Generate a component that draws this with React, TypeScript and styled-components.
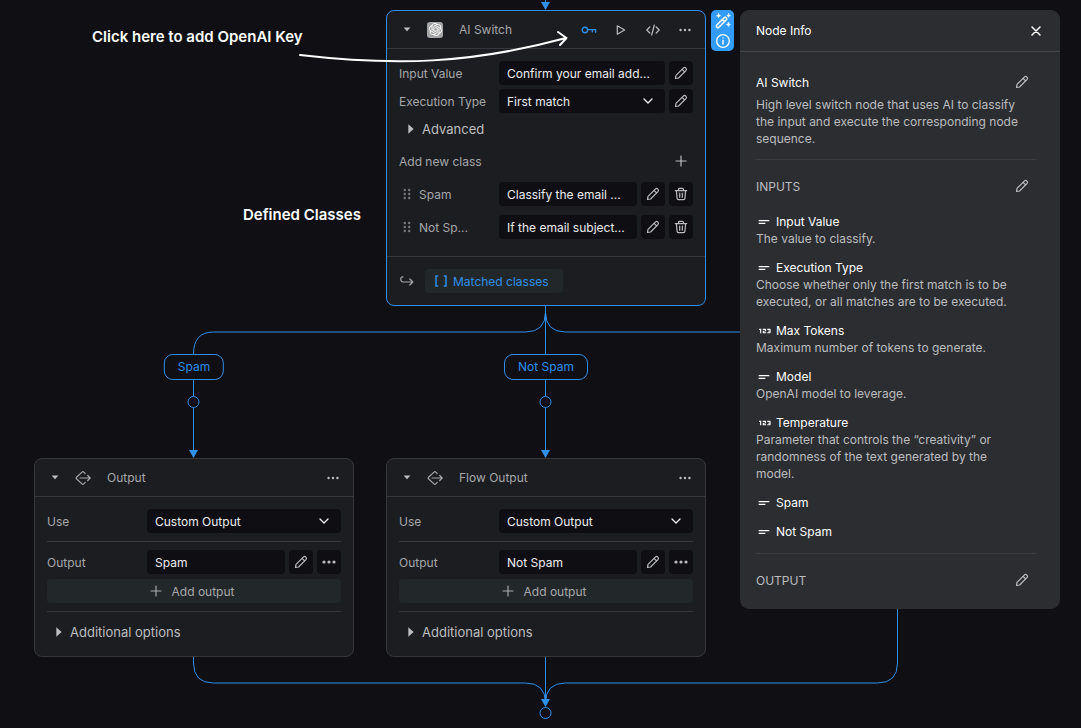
import React, { useId } from "react";
import styled, { createGlobalStyle, css } from "styled-components";
import { SiOpenai } from "react-icons/si";
import { Md123, MdShortText } from "react-icons/md";

const color = {
  canvas: "#101014",
  node: "#1c1d21",
  field: "#0f0f13",
  line: "#36383c",
  soft: "#222829",
  panel: "#2c2d31",
  panelLine: "#3b3c40",
  label: "#a6a7a9",
  muted: "#bcbdbf",
  bright: "#ececed",
  white: "#ffffff",
  blue: "#2f8fea",
  accent: "#339cff",
};

const GlobalStyle = createGlobalStyle`
  *, *::before, *::after { box-sizing: border-box; }
  body {
    margin: 0;
    background: ${color.canvas};
    color: ${color.label};
    font: 400 12px/17px Inter, "Liberation Sans", sans-serif;
  }
  button, input, select { font: inherit; color: inherit; }
  h2, h3, p { margin: 0; font: inherit; }
`;

/* ---------- icons ---------- */

const Stroke = styled.svg`
  display: block;
  flex: none;
  fill: none;
  stroke: currentColor;
  stroke-width: 1.2;
  stroke-linecap: round;
  stroke-linejoin: round;
`;

const PencilIcon = () => (
  <Stroke width="14" height="14" viewBox="0 0 14 14" aria-hidden="true">
    <path d="M1.5 12.5l.5-3.1L9.3 2.1a1.9 1.9 0 0 1 2.6 0 1.9 1.9 0 0 1 0 2.6L4.6 12z" />
    <path d="M8.1 3.4l2.5 2.5" />
  </Stroke>
);

const TrashIcon = () => (
  <Stroke width="14" height="14" viewBox="0 0 14 14" aria-hidden="true">
    <path d="M1.3 3.6h11.4M4.6 3.4V2.2q0-.9.9-.9h3q.9 0 .9.9v1.2M2.4 3.8l.7 7.6q.1 1.2 1.3 1.2h5.2q1.2 0 1.3-1.2l.7-7.6M5.7 6v4.2M8.3 6v4.2" />
  </Stroke>
);

const CaretIcon = () => (
  <svg width="8" height="5" viewBox="0 0 8 5" fill="currentColor" aria-hidden="true">
    <path d="M.6.6h6.8L4 4.2z" />
  </svg>
);

const TriangleIcon = () => (
  <svg width="6" height="10" viewBox="0 0 6 10" fill="currentColor" aria-hidden="true">
    <path d="M.3.2L5.6 5 .3 9.8z" />
  </svg>
);

const ChevronIcon = () => (
  <Stroke width="10" height="10" viewBox="0 0 10 10" aria-hidden="true">
    <path d="M1 3l4 4 4-4" strokeWidth="1.4" />
  </Stroke>
);

const DotsIcon = ({ large = false }: { large?: boolean }) => (
  <svg width="14" height="4" viewBox="0 0 14 4" fill="currentColor" aria-hidden="true">
    {(large ? [2, 7, 12] : [2.6, 7, 11.4]).map((x) => (
      <circle key={x} cx={x} cy="2" r={large ? 1.6 : 1.2} />
    ))}
  </svg>
);

const PlusIcon = () => (
  <Stroke width="12" height="12" viewBox="0 0 12 12" aria-hidden="true">
    <path d="M6 1v10M1 6h10" />
  </Stroke>
);

const KeyIcon = () => (
  <Stroke width="16" height="10" viewBox="0 0 16 10" aria-hidden="true">
    <circle cx="3.9" cy="5" r="2.7" strokeWidth="1.4" />
    <path d="M6.6 4.6h8v2.7M11.3 4.6v2.2" strokeWidth="1.4" />
  </Stroke>
);

const PlayIcon = () => (
  <Stroke width="10" height="12" viewBox="0 0 10 12" aria-hidden="true">
    <path d="M1.3 1.8v8.4L8.6 6z" />
  </Stroke>
);

const CodeIcon = () => (
  <Stroke width="14" height="12" viewBox="0 0 14 12" aria-hidden="true">
    <path d="M3.8 3L.8 6l3 3M10.2 3l3 3-3 3M8.3 1L5.7 11" />
  </Stroke>
);

const GripIcon = () => (
  <svg width="8" height="12" viewBox="0 0 8 12" fill="#77787b" aria-hidden="true">
    {[2, 6, 10].map((y) => (
      <g key={y}>
        <circle cx="1.8" cy={y} r="1.2" />
        <circle cx="6.2" cy={y} r="1.2" />
      </g>
    ))}
  </svg>
);

const ReturnIcon = () => (
  <Stroke width="14" height="12" viewBox="0 0 14 12" aria-hidden="true">
    <path d="M3 1.8H2.6a1.8 1.8 0 0 0-1.8 1.8v1.2a2.2 2.2 0 0 0 2.2 2.2h9.6M9.8 4l3 3-3 3" />
  </Stroke>
);

const OutputIcon = () => (
  <Stroke width="16" height="16" viewBox="0 0 16 16" aria-hidden="true">
    <path d="M10.2 3.6L8.800 2.1a1.2 1.2 0 0 0-1.8 0L1.5 7.2a1.100 1.100 0 0 0 0 1.6L7 13.900a1.2 1.2 0 0 0 1.8 0l1.4-1.500M5 8h10M12.700 5.500L15.2 8l-2.500 2.500" />
  </Stroke>
);

const BracketsIcon = () => (
  <Stroke width="12" height="12" viewBox="0 0 12 12" aria-hidden="true">
    <path d="M3.2 1H1v10h2.2M8.8 1H11v10H8.8" strokeWidth="1.5" strokeLinecap="butt" strokeLinejoin="miter" />
  </Stroke>
);

const CloseIcon = () => (
  <Stroke width="10" height="10" viewBox="0 0 10 10" aria-hidden="true">
    <path d="M1 1l8 8M9 1L1 9" strokeWidth="1.5" />
  </Stroke>
);

const WandIcon = () => (
  <Stroke width="16" height="16" viewBox="0 0 16 16" aria-hidden="true">
    <path d="M1.6 12.2l7.6-7.6a1.2 1.2 0 0 1 1.7 0l.5.5a1.2 1.2 0 0 1 0 1.7l-7.6 7.6a1.2 1.2 0 0 1-1.7 0l-.5-.5a1.2 1.2 0 0 1 0-1.7zM7.4 6.6l2 2" strokeWidth="1.5" />
    <path
      d="M3.6.6l.6 1.5 1.5.6-1.5.6-.6 1.5L3 3.3l-1.5-.6L3 2.1zM13.6.8l.5 1.3 1.3.5-1.3.5-.5 1.3-.5-1.3-1.3-.5 1.3-.5zM13.4 9.4l.6 1.5 1.5.6-1.5.6-.6 1.5-.6-1.5-1.5-.6 1.5-.6z"
      fill="currentColor"
      strokeWidth="0.6"
    />
  </Stroke>
);

const InfoIcon = () => (
  <Stroke width="16" height="16" viewBox="0 0 16 16" aria-hidden="true">
    <circle cx="8" cy="8" r="6.3" strokeWidth="1.3" />
    <path d="M8 7.4v3.6M8 4.9v.2" strokeWidth="1.4" />
  </Stroke>
);

/* ---------- canvas ---------- */

const Canvas = styled.main`
  position: relative;
  width: 100%;
  min-height: 100vh;
  overflow: hidden;
`;

const Placed = css<{ $x: number; $y: number }>`
  position: absolute;
  left: ${(p) => p.$x}px;
  top: ${(p) => p.$y}px;
`;

const Edges = styled.svg`
  position: absolute;
  inset: 0;
  width: 100%;
  height: 100%;
  fill: none;
  stroke: ${color.blue};
  pointer-events: none;
`;

const Annotations = styled(Edges)`
  stroke: ${color.white};
  stroke-width: 2;
  stroke-linecap: round;
  stroke-linejoin: round;
`;

const Note = styled.p`
  ${Placed}
  color: ${color.white};
  font-size: 15px;
  font-weight: 600;
  line-height: 20px;
  white-space: nowrap;
`;

const Branch = styled.span`
  ${Placed}
  transform: translateX(-50%);
  padding: 4px 13px;
  border: 1px solid ${color.blue};
  border-radius: 9px;
  background: ${color.canvas};
  color: ${color.blue};
  line-height: 16px;
  white-space: nowrap;
`;

/* ---------- nodes ---------- */

const NodeCard = styled.section<{ $x: number; $y: number; $selected?: boolean }>`
  ${Placed}
  width: 320px;
  border: 1px solid ${(p) => (p.$selected ? color.blue : color.line)};
  border-radius: 8px;
  background: ${color.node};
`;

const NodeHeader = styled.header`
  display: flex;
  align-items: center;
  height: 38px;
  padding: 0 8px;
  border-bottom: 1px solid ${color.line};
`;

const NodeIcon = styled.span`
  display: grid;
  place-items: center;
  width: 24px;
  height: 24px;
  margin: 0 12px 0 4px;
`;

const OpenAiBadge = styled.span`
  display: grid;
  place-items: center;
  width: 16px;
  height: 16px;
  border-radius: 3px;
  background: #a5a5a5;
  color: ${color.white};
`;

const NodeTitle = styled.h2`
  flex: 1;
`;

const HeaderActions = styled.div`
  display: flex;
  gap: 8px;
`;

const IconButton = styled.button<{ $filled?: boolean; $tone?: string }>`
  display: grid;
  place-items: center;
  flex: none;
  width: 24px;
  height: 24px;
  padding: 0;
  border: 0;
  border-radius: 4px;
  background: ${(p) => (p.$filled ? color.field : "transparent")};
  color: ${(p) => p.$tone ?? color.muted};
  cursor: pointer;
`;

const NodeBody = styled.div<{ $roomy?: boolean }>`
  padding: 12px 12px ${(p) => (p.$roomy ? 17 : 12)}px;
`;

const Stack = styled.div<{ $gap: number }>`
  display: flex;
  flex-direction: column;
  gap: ${(p) => p.$gap}px;
`;

const Row = styled.div`
  display: flex;
  align-items: center;
  gap: 4px;
`;

const RowLabel = styled.label`
  display: flex;
  align-items: center;
  gap: 8px;
  flex: none;
  width: 96px;
  height: 24px;
  white-space: nowrap;
`;

const GripLabel = styled(RowLabel)`
  padding-left: 4px;
`;

const fieldStyle = css`
  width: 100%;
  min-width: 0;
  height: 24px;
  padding: 0 8px;
  border: 0;
  border-radius: 4px;
  background: ${color.field};
  color: ${color.bright};
`;

const TextField = styled.input`
  ${fieldStyle}
  flex: 1;
  text-overflow: ellipsis;
`;

const SelectWrap = styled.span`
  display: grid;
  flex: 1;
  align-items: center;
  color: ${color.bright};

  > * { grid-area: 1 / 1; }
  > svg { justify-self: end; margin-right: 12px; pointer-events: none; }
`;

const SelectField = styled.select`
  ${fieldStyle}
  appearance: none;
`;

const Disclosure = styled.button`
  display: flex;
  align-items: center;
  gap: 8px;
  height: 24px;
  padding: 0 9px;
  border: 0;
  background: none;
  color: ${color.muted};
  font-size: 13px;
  cursor: pointer;
`;

const AddClassRow = styled.div`
  display: flex;
  align-items: center;
  justify-content: space-between;
  margin: 8px 0 9px;
`;

const Rule = styled.hr<{ $tone?: string }>`
  height: 1px;
  margin: 8px 0;
  border: 0;
  background: ${(p) => p.$tone ?? color.line};
`;

const AddOutput = styled.button`
  display: flex;
  align-items: center;
  justify-content: center;
  gap: 10px;
  width: 100%;
  height: 24px;
  margin-top: 5px;
  padding: 0 10px 0 6px;
  border: 0;
  border-radius: 4px;
  background: ${color.soft};
  color: ${color.label};
  cursor: pointer;
`;

const NodeFooter = styled.footer`
  display: flex;
  align-items: center;
  gap: 11px;
  padding: 12px 13px;
  border-top: 1px solid ${color.line};
`;

const OutputChip = styled.span`
  display: flex;
  align-items: center;
  gap: 6px;
  height: 24px;
  padding: 0 14px 0 10px;
  border-radius: 4px;
  background: ${color.soft};
  color: ${color.blue};
`;

/* ---------- node info ---------- */

const QuickBar = styled.div`
  position: absolute;
  top: 10px;
  right: 347px;
  display: flex;
  flex-direction: column;
  padding-top: 1px;
  border-radius: 5px;
  background: ${color.accent};
`;

const QuickButton = styled(IconButton)`
  width: 23px;
  height: 20px;
  color: ${color.white};
`;

const Panel = styled.aside`
  position: absolute;
  top: 10px;
  right: 21px;
  width: 320px;
  border-radius: 9px;
  background: ${color.panel};
  color: ${color.muted};
`;

const PanelHeader = styled.header`
  display: flex;
  align-items: center;
  justify-content: space-between;
  height: 42px;
  padding: 0 12px 0 16px;
  border-bottom: 1px solid #46474b;
  color: ${color.white};
`;

const PanelBody = styled.div`
  padding: 18px 24px 17px 16px;
`;

const SectionHead = styled.div`
  display: flex;
  align-items: center;
  justify-content: space-between;
  height: 24px;
  padding-right: 2px;
`;

const Name = styled.h3`
  display: flex;
  align-items: center;
  color: ${color.white};
`;

const About = styled.p`
  padding-right: 16px;
`;

const Summary = styled(About)`
  margin-top: 2px;
`;

const TypeIcon = styled.span`
  display: flex;
  align-items: center;
  width: 20px;
  height: 17px;

  svg { flex: none; }
`;

const InputList = styled.ul`
  display: flex;
  flex-direction: column;
  gap: 12px;
  margin: 15px 0 13px;
  padding: 0;
  list-style: none;
`;

const PanelRule = styled(Rule)`
  margin: 12px 0 14px;
`;

/* ---------- pieces ---------- */

const EditButton = ({ name, filled }: { name: string; filled?: boolean }) => (
  <IconButton $filled={filled} aria-label={`Edit ${name}`}>
    <PencilIcon />
  </IconButton>
);

const Select = ({ id, value }: { id: string; value: string }) => (
  <SelectWrap>
    <SelectField id={id} defaultValue={value}>
      <option>{value}</option>
    </SelectField>
    <ChevronIcon />
  </SelectWrap>
);

const ClassRow = ({ name, prompt }: { name: string; prompt: string }) => {
  const id = useId();
  return (
    <Row>
      <GripLabel htmlFor={id}>
        <GripIcon />
        {name}
      </GripLabel>
      <TextField id={id} defaultValue={prompt} />
      <EditButton name={name} filled />
      <IconButton $filled aria-label={`Delete ${name}`}>
        <TrashIcon />
      </IconButton>
    </Row>
  );
};

const SwitchNode = ({ x, y }: { x: number; y: number }) => {
  const id = useId();
  return (
    <NodeCard $x={x} $y={y} $selected>
      <NodeHeader>
        <IconButton aria-label="Collapse"><CaretIcon /></IconButton>
        <NodeIcon>
          <OpenAiBadge><SiOpenai size={13} /></OpenAiBadge>
        </NodeIcon>
        <NodeTitle>AI Switch</NodeTitle>
        <HeaderActions>
          <IconButton aria-label="API key" $tone={color.blue}><KeyIcon /></IconButton>
          <IconButton aria-label="Run"><PlayIcon /></IconButton>
          <IconButton aria-label="Code"><CodeIcon /></IconButton>
          <IconButton aria-label="More"><DotsIcon /></IconButton>
        </HeaderActions>
      </NodeHeader>
      <NodeBody $roomy>
        <Stack $gap={4}>
          <Row>
            <RowLabel htmlFor={`${id}-value`}>Input Value</RowLabel>
            <TextField id={`${id}-value`} defaultValue="Confirm your email add..." />
            <EditButton name="Input Value" filled />
          </Row>
          <Row>
            <RowLabel htmlFor={`${id}-type`}>Execution Type</RowLabel>
            <Select id={`${id}-type`} value="First match" />
            <EditButton name="Execution Type" filled />
          </Row>
          <Disclosure><TriangleIcon />Advanced</Disclosure>
        </Stack>
        <AddClassRow>
          Add new class
          <IconButton aria-label="Add new class"><PlusIcon /></IconButton>
        </AddClassRow>
        <Stack $gap={9}>
          <ClassRow name="Spam" prompt="Classify the email ..." />
          <ClassRow name="Not Sp..." prompt="If the email subject..." />
        </Stack>
      </NodeBody>
      <NodeFooter>
        <ReturnIcon />
        <OutputChip><BracketsIcon />Matched classes</OutputChip>
      </NodeFooter>
    </NodeCard>
  );
};

const OutputNode = ({ x, y, title, value }: { x: number; y: number; title: string; value: string }) => {
  const id = useId();
  return (
    <NodeCard $x={x} $y={y}>
      <NodeHeader>
        <IconButton aria-label="Collapse"><CaretIcon /></IconButton>
        <NodeIcon><OutputIcon /></NodeIcon>
        <NodeTitle>{title}</NodeTitle>
        <IconButton aria-label="More"><DotsIcon /></IconButton>
      </NodeHeader>
      <NodeBody>
        <Row>
          <RowLabel htmlFor={`${id}-use`}>Use</RowLabel>
          <Select id={`${id}-use`} value="Custom Output" />
        </Row>
        <Rule />
        <Row>
          <RowLabel htmlFor={`${id}-output`}>Output</RowLabel>
          <TextField id={`${id}-output`} defaultValue={value} />
          <EditButton name="Output" filled />
          <IconButton $filled aria-label="Output options"><DotsIcon large /></IconButton>
        </Row>
        <AddOutput><PlusIcon />Add output</AddOutput>
        <Rule />
        <Disclosure><TriangleIcon />Additional options</Disclosure>
      </NodeBody>
    </NodeCard>
  );
};

type InputInfo = { name: string; kind: "text" | "number"; about?: string };

const inputs: InputInfo[] = [
  { name: "Input Value", kind: "text", about: "The value to classify." },
  {
    name: "Execution Type",
    kind: "text",
    about: "Choose whether only the first match is to be executed, or all matches are to be executed.",
  },
  { name: "Max Tokens", kind: "number", about: "Maximum number of tokens to generate." },
  { name: "Model", kind: "text", about: "OpenAI model to leverage." },
  {
    name: "Temperature",
    kind: "number",
    about: "Parameter that controls the “creativity” or randomness of the text generated by the model.",
  },
  { name: "Spam", kind: "text" },
  { name: "Not Spam", kind: "text" },
];

const NodeInfo = () => (
  <Panel>
    <PanelHeader>
      <h2>Node Info</h2>
      <IconButton aria-label="Close" $tone={color.white}><CloseIcon /></IconButton>
    </PanelHeader>
    <PanelBody>
      <SectionHead>
        <Name>AI Switch</Name>
        <EditButton name="description" />
      </SectionHead>
      <Summary>
        High level switch node that uses AI to classify the input and execute the corresponding node sequence.
      </Summary>
      <PanelRule $tone={color.panelLine} />
      <SectionHead>
        <h3>INPUTS</h3>
        <EditButton name="inputs" />
      </SectionHead>
      <InputList>
        {inputs.map(({ name, kind, about }) => (
          <li key={name}>
            <Name>
              <TypeIcon>{kind === "text" ? <MdShortText size={16} /> : <Md123 size={18} />}</TypeIcon>
              {name}
            </Name>
            {about && <About>{about}</About>}
          </li>
        ))}
      </InputList>
      <PanelRule $tone={color.panelLine} />
      <SectionHead>
        <h3>OUTPUT</h3>
        <EditButton name="output" />
      </SectionHead>
    </PanelBody>
  </Panel>
);

const FlowEdges = () => (
  <Edges aria-hidden="true">
    <path d="M545.5 0V4M545.5 306V354M545.5 380V396M545.5 408V452M193.5 380V396M193.5 408V452M545.5 657V701" />
    <path d="M545.5 306V312Q545.5 332 525.5 332H213.5Q193.5 332 193.5 354M545.5 312Q545.5 332 565.5 332H877.5Q897.5 332 897.5 352V663Q897.5 683 877.5 683H565.5Q545.5 683 545.5 703" />
    <path d="M193.5 657V663Q193.5 683 213.5 683H525.5Q545.5 683 545.5 703" />
    <g>
      <circle cx="193.5" cy="402" r="5.5" />
      <circle cx="545.5" cy="402" r="5.5" />
      <circle cx="545.5" cy="713" r="5.5" />
    </g>
    <g fill={color.blue} stroke="none">
      <path d="M541 2h9l-4.5 8z" />
      <path d="M189 450h9l-4.5 8z" />
      <path d="M541 450h9l-4.5 8z" />
      <path d="M541 699h9l-4.5 8z" />
    </g>
  </Edges>
);

export default function App() {
  return (
    <>
      <GlobalStyle />
      <Canvas>
        <FlowEdges />
        <Branch $x={194} $y={354}>Spam</Branch>
        <Branch $x={546} $y={354}>Not Spam</Branch>
        <SwitchNode x={386} y={10} />
        <OutputNode x={34} y={458} title="Output" value="Spam" />
        <OutputNode x={386} y={458} title="Flow Output" value="Not Spam" />
        <Note $x={92} $y={27}>Click here to add OpenAI Key</Note>
        <Note $x={243} $y={205}>Defined Classes</Note>
        <Annotations aria-hidden="true">
          <path d="M300 55C395 66 470 64 566 38M558 32L566.5 38L560 45" />
        </Annotations>
        <QuickBar>
          <QuickButton aria-label="Suggest"><WandIcon /></QuickButton>
          <QuickButton aria-label="Node info"><InfoIcon /></QuickButton>
        </QuickBar>
        <NodeInfo />
      </Canvas>
    </>
  );
}
